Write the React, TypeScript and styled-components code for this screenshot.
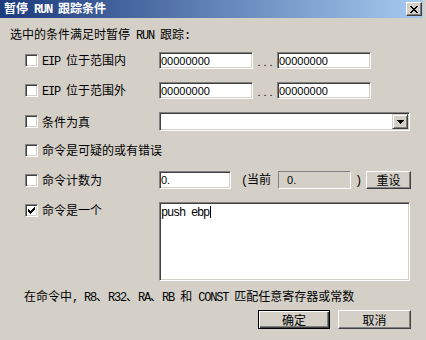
import styled, { createGlobalStyle } from "styled-components";

const GlobalStyle = createGlobalStyle`
  html, body {
    margin: 0;
    padding: 0;
    background: #d4d0c8;
  }
  body {
    font-family: "Noto Sans CJK SC", "Liberation Sans", sans-serif;
    font-size: 12px;
    color: #000;
  }
`;

const Window = styled.div`
  width: 426px;
  height: 340px;
  box-sizing: border-box;
  padding-right: 3px;
  background: #d4d0c8;
  overflow: hidden;
`;

const TitleBar = styled.div`
  height: 18px;
  display: flex;
  align-items: center;
  justify-content: space-between;
  padding: 0 1px 0 4px;
  background: linear-gradient(to right, #1c3a7c, #a6caf0);
`;

const TitleText = styled.span`
  color: #fff;
  font-weight: 700;
  line-height: 14px;
`;

// latin text in the dialog font is half the width of a CJK glyph
const L = styled.span`
  font-family: "Liberation Mono", monospace;
  font-size: 12px;
  letter-spacing: -1.2px;
`;

const raised = `
  border: 1px solid;
  border-color: #fff #404040 #404040 #fff;
  box-shadow: inset -1px -1px #808080;
  background: #d4d0c8;
`;

const CloseButton = styled.div`
  width: 16px;
  height: 14px;
  box-sizing: border-box;
  ${raised}
  display: flex;
  align-items: center;
  justify-content: center;
`;

const Body = styled.div`
  padding: 9px 12px 0 10px;
`;

const Heading = styled.div`
  line-height: 14px;
  height: 14px;
`;

const Options = styled.div`
  margin-left: 15px;
  display: flex;
  flex-direction: column;
`;

const Row = styled.div<{ $h: number; $mt: number; $top?: boolean }>`
  display: grid;
  grid-template-columns: 134px 1fr;
  align-items: ${(p) => (p.$top ? "start" : "center")};
  height: ${(p) => p.$h}px;
  margin-top: ${(p) => p.$mt}px;
`;

const Label = styled.div<{ $pt?: number }>`
  display: flex;
  align-items: center;
  gap: 4px;
  line-height: 14px;
  white-space: nowrap;
  padding-top: ${(p) => p.$pt ?? 0}px;
`;

const Box = styled.span`
  width: 13px;
  height: 13px;
  box-sizing: border-box;
  flex: none;
  border: 1px solid;
  border-color: #808080 #fff #fff #808080;
  box-shadow: inset 1px 1px #404040, inset -1px -1px #d4d0c8;
  background: #fff;
  display: flex;
  align-items: center;
  justify-content: center;
`;

const Controls = styled.div`
  display: flex;
  align-items: center;
  height: 100%;
`;

const sunken = `
  border: 1px solid;
  border-color: #808080 #fff #fff #808080;
  box-shadow: inset 1px 1px #404040, inset -1px -1px #d4d0c8;
`;

const Field = styled.input<{ $w: number; $h?: number }>`
  box-sizing: border-box;
  width: ${(p) => p.$w}px;
  height: ${(p) => p.$h ?? 17}px;
  margin: 0;
  padding: 0 1px;
  ${sunken}
  background: #fff;
  font: 11px "Liberation Sans", sans-serif;
  color: #000;
  outline: none;
`;

const Dots = styled.span`
  width: 24px;
  text-align: center;
  font: 11px "Liberation Sans", sans-serif;
  letter-spacing: 3px;
  text-indent: 3px;
  padding-top: 3px;
`;

const Combo = styled.div`
  box-sizing: border-box;
  width: 251px;
  height: 19px;
  padding: 1px;
  ${sunken}
  background: #fff;
  display: flex;
  justify-content: flex-end;
`;

const DropButton = styled.div`
  width: 16px;
  box-sizing: border-box;
  border: 1px solid;
  border-color: #d4d0c8 #404040 #404040 #d4d0c8;
  box-shadow: inset 1px 1px #fff, inset -1px -1px #808080;
  background: #d4d0c8;
  display: flex;
  align-items: center;
  justify-content: center;
`;

const Paren = styled.span<{ $ml: number }>`
  margin-left: ${(p) => p.$ml}px;
  line-height: 14px;
`;

const Readout = styled.div`
  box-sizing: border-box;
  width: 73px;
  height: 18px;
  margin-left: 7px;
  padding-left: 8px;
  border: 1px solid;
  border-color: #808080 #fff #fff #808080;
  display: flex;
  align-items: center;
  font: 11px "Liberation Sans", sans-serif;
`;

const Button = styled.div<{ $w: number; $h: number; $ml?: number; $default?: boolean }>`
  box-sizing: border-box;
  width: ${(p) => p.$w}px;
  height: ${(p) => p.$h}px;
  margin-left: ${(p) => p.$ml ?? 0}px;
  display: flex;
  align-items: center;
  justify-content: center;
  line-height: 14px;
  background: #d4d0c8;
  border: 1px solid;
  border-color: ${(p) => (p.$default ? "#000" : "#fff #404040 #404040 #fff")};
  box-shadow: ${(p) =>
    p.$default
      ? "inset 1px 1px #fff, inset -1px -1px #404040, inset -2px -2px #808080"
      : "inset -1px -1px #808080"};
`;

const Memo = styled.div`
  box-sizing: border-box;
  width: 251px;
  height: 79px;
  padding: 1px 1px;
  ${sunken}
  background: #fff;
  line-height: 14px;
`;

const Caret = styled.span`
  display: inline-block;
  width: 1px;
  height: 12px;
  margin-left: 1px;
  background: #000;
  vertical-align: -2px;
`;

const Note = styled.div`
  margin: 8px 0 0 14px;
  line-height: 14px;
  white-space: nowrap;
`;

const Footer = styled.div`
  margin-top: 5px;
  display: flex;
  justify-content: flex-end;
  gap: 8px;
`;

function Check({ on }: { on?: boolean }) {
  return (
    <Box>
      {on && (
        <svg width="7" height="7" viewBox="0 0 7 7" shapeRendering="crispEdges">
          <path d="M0 2h1v3h-1zM1 3h1v3h-1zM2 4h1v3h-1zM3 3h1v3h-1zM4 2h1v3h-1zM5 1h1v3h-1zM6 0h1v3h-1z" fill="#000" />
        </svg>
      )}
    </Box>
  );
}

function CloseGlyph() {
  return (
    <svg width="8" height="7" viewBox="0 0 8 7" shapeRendering="crispEdges">
      <path
        d="M0 0h2v1h-2zM6 0h2v1h-2zM1 1h2v1h-2zM5 1h2v1h-2zM2 2h4v1h-4zM3 3h2v1h-2zM2 4h4v1h-4zM1 5h2v1h-2zM5 5h2v1h-2zM0 6h2v1h-2zM6 6h2v1h-2z"
        fill="#000"
      />
    </svg>
  );
}

function Arrow() {
  return (
    <svg width="7" height="4" viewBox="0 0 7 4" shapeRendering="crispEdges">
      <path d="M0 0h7v1h-7zM1 1h5v1h-5zM2 2h3v1h-3zM3 3h1v1h-1z" fill="#000" />
    </svg>
  );
}

export default function App() {
  return (
    <>
      <GlobalStyle />
      <Window>
        <TitleBar>
          <TitleText>
            暂停<L> RUN </L>跟踪条件
          </TitleText>
          <CloseButton>
            <CloseGlyph />
          </CloseButton>
        </TitleBar>

        <Body>
          <Heading>
            选中的条件满足时暂停<L> RUN </L>跟踪<L>:</L>
          </Heading>

          <Options>
            <Row $h={17} $mt={11}>
              <Label>
                <Check />
                <span>
                  <L>EIP </L>位于范围内
                </span>
              </Label>
              <Controls>
                <Field $w={94} defaultValue="00000000" />
                <Dots>...</Dots>
                <Field $w={94} defaultValue="00000000" />
              </Controls>
            </Row>

            <Row $h={17} $mt={13}>
              <Label>
                <Check />
                <span>
                  <L>EIP </L>位于范围外
                </span>
              </Label>
              <Controls>
                <Field $w={94} defaultValue="00000000" />
                <Dots>...</Dots>
                <Field $w={94} defaultValue="00000000" />
              </Controls>
            </Row>

            <Row $h={19} $mt={13}>
              <Label>
                <Check />
                <span>条件为真</span>
              </Label>
              <Combo>
                <DropButton>
                  <Arrow />
                </DropButton>
              </Combo>
            </Row>

            <Row $h={12} $mt={12}>
              <Label>
                <Check />
                <span>命令是可疑的或有错误</span>
              </Label>
            </Row>

            <Row $h={18} $mt={16}>
              <Label>
                <Check />
                <span>命令计数为</span>
              </Label>
              <Controls>
                <Field $w={72} $h={18} defaultValue="0." />
                <Paren $ml={10}>
                  <L>(</L>当前
                </Paren>
                <Readout>0.</Readout>
                <Paren $ml={4}>
                  <L>)</L>
                </Paren>
                <Button $w={45} $h={18} $ml={5}>
                  重设
                </Button>
              </Controls>
            </Row>

            <Row $h={79} $mt={13} $top>
              <Label $pt={1}>
                <Check on />
                <span>命令是一个</span>
              </Label>
              <Memo>
                <L>push ebp</L>
                <Caret />
              </Memo>
            </Row>
          </Options>

          <Note>
            在命令中<L>, R8</L>、<L>R32</L>、<L>RA</L>、<L>RB </L>和<L> CONST </L>匹配任意寄存器或常数
          </Note>

          <Footer>
            <Button $w={72} $h={19} $default>
              确定
            </Button>
            <Button $w={73} $h={19}>
              取消
            </Button>
          </Footer>
        </Body>
      </Window>
    </>
  );
}
